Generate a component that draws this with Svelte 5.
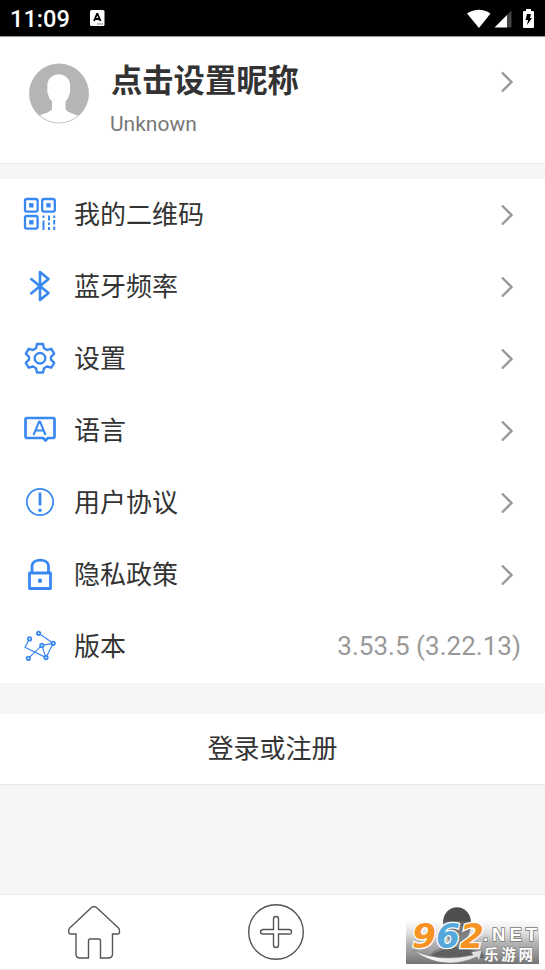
<script>
  const items = [
    { icon: 'qr', label: '我的二维码' },
    { icon: 'bluetooth', label: '蓝牙频率' },
    { icon: 'gear', label: '设置' },
    { icon: 'language', label: '语言' },
    { icon: 'notice', label: '用户协议' },
    { icon: 'lock', label: '隐私政策' },
    { icon: 'version', label: '版本', value: '3.53.5 (3.22.13)' }
  ];
  const nodes = [[15.6, 4.3], [6.5, 9.9], [30.2, 14.3], [18.8, 16.4], [23, 28.6], [5.3, 29.4]];
</script>

{#snippet chevron()}
  <svg class="chevron" width="14" height="24" viewBox="0 0 14 24"><path d="M2 2.5 11.5 12 2 21.5" /></svg>
{/snippet}

<div class="screen">
  <header class="status">
    <span class="time">11:09</span>
    <svg class="input-icon" width="15" height="17" viewBox="0 0 15 17">
      <rect width="14.5" height="16" rx="1.5" fill="#fff" />
      <path d="M4 11 7 4h.5l3 7M5.2 9h4.2" fill="none" stroke="#000" stroke-width="1.8" />
      <path d="M7 14h6" stroke="#555" stroke-dasharray="1.5 .7" />
    </svg>
    <svg class="signals" width="70" height="22" viewBox="0 0 70 22">
      <path d="M0 5.5Q12-2 23.5 5.5L12 20Z" fill="#fff" />
      <path d="M27.5 19.5H40V7Z" fill="#fff" /><path d="M40 7 44.5 2.5v17H40Z" fill="#444" />
      <path d="M59 1h5v2h2a1 1 0 0 1 1 1v15a1 1 0 0 1-1 1h-9a1 1 0 0 1-1-1V4a1 1 0 0 1 1-1h2Z" fill="#fff" />
      <path d="M60 6h4l-1 4h2l-5 7 1-5h-2.500Z" fill="#000" />
    </svg>
  </header>

  <section class="profile">
    <svg class="avatar" width="60" height="61" viewBox="0 0 60 61">
      <defs><clipPath id="avatar-circle"><circle cx="30" cy="30.5" r="29.7" /></clipPath></defs>
      <g clip-path="url(#avatar-circle)">
        <path fill="#b5b5b5" d="M0 0h60v61H0z" />
        <path fill="#fff" d="M18.500 25C16 6.500 43.500 6.500 41 25c.6 1.500 0 6-1.300 8-.8 3-1.500 4-3.200 5v8c2 4 8 4.500 14 7l-5 10H13L9 53c6-2.500 12-3.500 14-7v-8c-1.700-1-2.500-2-3.300-5-1.300-2-1.800-6.500-1.200-8Z" />
      </g>
      <circle cx="30" cy="30.5" r="29.500" fill="none" stroke="#b9b9b9" stroke-width=".8" />
    </svg>
    <div class="identity">
      <h1>点击设置昵称</h1>
      <p>Unknown</p>
    </div>
    {@render chevron()}
  </section>

  <ul class="menu">
    {#each items as item}
      <li>
        <svg class="icon {item.icon}" width="34" height="34" viewBox="0 0 34 34">
          {#if item.icon === 'qr'}
            {#each [[2, 2], [19.2, 2], [2, 19]] as [x, y]}
              <rect {x} {y} width="12.6" height="12.6" rx="1.8" stroke-width="2.3" />
              <rect x={x + 4.1} y={y + 4.1} width="4.400" height="4.400" class="solid" />
            {/each}
            <path stroke-width="2" d="M20.500 18.500v2.500M20.500 23.500v9.500M26 18.500v5M26 25.500v2.500M26 30v3M31.200 18.500v2.500M31.200 23v4.500M31.200 29.500v3.500" />
          {:else if item.icon === 'bluetooth'}
            <path stroke-width="2.600" d="M7.500 9.500 25.500 24 17 31V3l8.500 7L7.500 25" />
          {:else if item.icon === 'gear'}
            <path stroke-width="2.400" d="M14 3h6l1 4.300 3 1.700 4.300-1.200 2.900 4.900-3.200 3.100v2.900l3.200 3.100-2.900 4.900-4.300-1.200-3 1.700-1 4.300h-6l-1-4.300-3-1.700-4.300 1.200-2.900-4.900L6 18.700v-2.900l-3.200-3.100 2.900-4.900L10 9l3-1.700Z" />
            <circle cx="17" cy="17.250" r="5.300" stroke-width="2.400" />
          {:else if item.icon === 'language'}
            <path stroke-width="2.700" d="M4 5h26a1.500 1.500 0 0 1 1.500 1.500v17A1.500 1.500 0 0 1 30 25h-5l-2.500 2.500L20 25H4a1.500 1.500 0 0 1-1.500-1.500v-17A1.500 1.500 0 0 1 4 5Z" />
            <path stroke-width="2" d="m10.500 22 5.700-13.500h.8L22.500 22M12.500 17.500h8" />
          {:else if item.icon === 'notice'}
            <circle cx="17" cy="17" r="13.200" stroke-width="1.700" />
            <path stroke-width="2.800" d="M17 7.500V20.500" /><circle cx="17" cy="25.300" r="1.800" class="solid" />
          {:else if item.icon === 'lock'}
            <path stroke-width="2.800" d="M6.500 16h21v15.500h-21ZM9 16V9.500C9 1 25.500 1 25.500 9.500V16" />
            <circle cx="17" cy="23.800" r="2.200" class="solid" />
          {:else}
            <path stroke-width="1.200" d="M15.600 4.300 30.200 14.300 23 28.600 18.800 16.400 30.200 14.300M18.800 16.400 5.300 29.400M6.500 9.900 2 18.200 23 28.600" />
            {#each nodes as [cx, cy]}<circle {cx} {cy} r="1.700" stroke-width="1.800" fill="#fff" />{/each}
          {/if}
        </svg>
        <span class="label">{item.label}</span>
        {#if item.value}<span class="value">{item.value}</span>{:else}{@render chevron()}{/if}
      </li>
    {/each}
  </ul>

  <button class="login">登录或注册</button>

  <nav>
    <svg class="home" width="54" height="56" viewBox="0 0 54 56">
      <path d="M24.500 1.500Q27 -.5 29.500 1.500L51.500 22Q53 23.500 52.300 27L51 28H45.500V48Q45.500 52 41 52H33.500V35Q33.500 33 31.500 33H23Q21.500 33 21.500 35V52H13Q9 52 9 48V28H3.200L1.900 27Q1.200 23.500 2.700 22Z" />
    </svg>
    <svg class="add" width="58" height="58" viewBox="0 0 58 58">
      <circle cx="29" cy="29" r="27.300" />
      <path d="M26.500 26.500V16Q26.500 13.500 29 13.500T31.500 16V26.500H42Q44.500 26.500 44.500 29T42 31H31.500V42Q31.500 44.500 29 44.500T26.500 42V31H16Q13.500 31 13.500 29T16 26.500Z" />
    </svg>
    <svg class="me" width="134" height="60" viewBox="0 0 134 60">
      <defs>
        <linearGradient id="plate" x1="0" y1="0" x2="0" y2="1">
          <stop offset="0" stop-color="#ddd" stop-opacity=".12" />
          <stop offset=".5" stop-color="#999" stop-opacity=".72" />
          <stop offset="1" stop-color="#737373" />
        </linearGradient>
        <linearGradient id="swoosh"><stop stop-color="#fff" /><stop offset="1" stop-color="#ddd" /></linearGradient>
      </defs>
      <path fill="#4e4e4e" d="M37 17C37-4 65-4 65 17c0 7-2 12-5 17v4c3 4 18 5 19 12H24c1-7 16-8 19-12v-4c-4-5-6-10-6-17Z" />
      <rect y="15" width="133" height="43" fill="url(#plate)" />
      <path fill="#555" fill-opacity=".75" d="M25 52c0-6 13-7 18-11h17c5 4 18 5 18 11Z" />
      <path fill="url(#swoosh)" stroke="#777" stroke-width=".6" d="M7 44Q33 57 67 49L65 46 76 44 73 55 71 51Q36 66 7 44Z" />
      <g class="brand">
        <text x="6" y="42" fill="#f79322" textLength="24" lengthAdjust="spacingAndGlyphs">9</text>
        <text x="30" y="42" fill="#55a8dc" textLength="24" lengthAdjust="spacingAndGlyphs">6</text>
        <text x="54" y="42" fill="#f79322" textLength="24" lengthAdjust="spacingAndGlyphs">2</text>
      </g>
      <text class="domain" x="77" y="35" textLength="54">.NET</text>
      <text class="site" x="78" y="53.5" textLength="49">乐游网</text>
    </svg>
  </nav>
</div>

<style>
  :global(body) { background: #f6f6f6; }
  .screen {
    width: 545px; height: 970px; box-sizing: border-box; display: flex; flex-direction: column;
    background: #f6f6f6; color: #333; font-family: Roboto, "Noto Sans CJK SC", sans-serif;
    overflow: hidden;
  }
  svg { display: block; flex: none; }
  .status { height: 36px; flex: none; display: flex; background: #000; color: #fff; border-bottom: 1px solid #999; box-sizing: content-box; }
  .time { width: 80px; padding-left: 10px; font-size: 23.600px; line-height: 38px; font-weight: 500; box-sizing: border-box; }
  .input-icon { margin: 10px 0 0 10px; }
  .signals { margin: 8px 8px 0 auto; }
  .profile { height: 126px; flex: none; display: flex; background: #fff; border-bottom: 1px solid #e8e8e8; padding: 0 31px 0 29px; }
  .avatar { margin-top: 26px; }
  .identity { margin-left: 22px; flex: 1; }
  h1 { margin: 22px 0 0; font-size: 31.300px; line-height: 46px; font-weight: 700; }
  p { margin: 6px 0 0 -1px; font-size: 21px; line-height: 26px; color: #777; }
  .chevron { fill: none; stroke: #999; stroke-width: 2.400; }
  .profile .chevron { margin-top: 33px; }
  .menu { list-style: none; margin: 15px 0 0; padding: 0; background: #fff; }
  li { height: 72px; display: flex; align-items: center; padding: 0 31px 0 23px; }
  .icon { fill: none; stroke: #3988f2; stroke-linejoin: round; margin-top: -2px; }
  .icon .solid { fill: #3988f2; stroke: none; }
  .label { margin-left: 17px; flex: 1; font-size: 26px; line-height: 38px; }
  .value { font-size: 26px; color: #999; margin-right: -7px; margin-top: -2px; letter-spacing: .02px; }
  .login { flex: none; height: 71px; margin: 31px 0 0; padding: 0; border: 0; border-bottom: 1px solid #e8e8e8; background: #fff; font: 26px/38px Roboto, "Noto Sans CJK SC", sans-serif; color: #333; }
  nav { margin-top: auto; height: 74px; border-top: 1px solid #e7e7e7; border-bottom: 1px solid #e5e5e5; background: #fff; display: flex; align-items: flex-start; flex: none; }
  .home, .add { fill: none; stroke: #555; stroke-width: 1.400; }
  .home { margin: 11px 0 0 67px; }
  .add { margin: 8px 0 0 126px; }
  .me { margin: 11px 0 0 101px; }
  .brand { font: italic 700 33px "DejaVu Sans", sans-serif; stroke: #fff; stroke-width: 2.500px; paint-order: stroke; }
  .domain { font: 700 18.500px "Liberation Sans", sans-serif; fill: #fff; stroke: #777; stroke-width: 1.500px; paint-order: stroke; }
  .site { font: 700 14.500px "Noto Sans CJK SC", sans-serif; fill: #fff; stroke: #777; stroke-width: 1px; paint-order: stroke; }
</style>
